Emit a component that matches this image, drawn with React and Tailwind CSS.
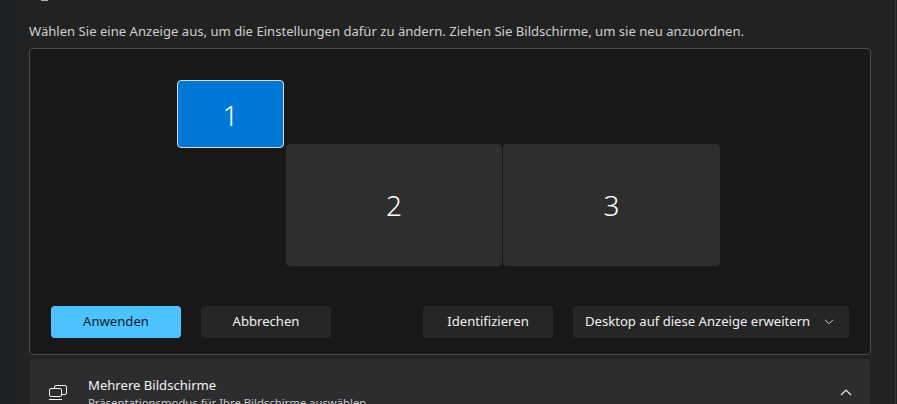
function Monitor({ n, className }) {
  return (
    <div className={`absolute flex items-center justify-center text-[28px] font-light text-white ${className}`}>
      {n}
    </div>
  );
}

function Btn({ children, className = "" }) {
  return (
    <button className={`flex h-8 items-center rounded-[4px] text-[13.1px] ${className}`}>
      {children}
    </button>
  );
}

export default function App() {
  return (
    <div className="relative h-[404px] w-[897px] overflow-hidden bg-gradient-to-r from-[#1d2024] from-0% to-[#222222] to-[4%] font-['Noto_Sans',sans-serif]">
      <div className="absolute left-[41px] top-0 h-px w-[7px] bg-[#b0b0b0]" />
      <div className="absolute right-[1px] top-0 h-full w-px bg-[#383838]" />
      <div className="flex h-full flex-col pl-[29px] pr-[26px] pt-[22px]">
        <p className="h-[26px] shrink-0 whitespace-nowrap text-[13.1px] leading-[19px] text-[#cfcfcf]">
          Wählen Sie eine Anzeige aus, um die Einstellungen dafür zu ändern. Ziehen Sie Bildschirme, um sie neu anzuordnen.
        </p>
        <div className="relative h-[307px] w-[842px] shrink-0 rounded-[4px] border border-[#4a4a4a] bg-[#181818]">
          <Monitor n="1" className="left-[147px] top-[31px] h-[68px] w-[107px] rounded-[4px] border border-[#d5dde3] bg-[#0078d7] pt-[2px]" />
          <Monitor n="2" className="left-[256px] top-[95px] h-[122px] w-[216px] rounded-[4px] bg-[#2e2e2e]" />
          <Monitor n="3" className="left-[473px] top-[95px] h-[122px] w-[217px] rounded-[4px] bg-[#2e2e2e]" />
          <div className="absolute bottom-[16px] left-[21px] right-[21px] flex items-center">
            <Btn className="w-[130px] justify-center bg-[#4cc2ff] text-[#10202a]">Anwenden</Btn>
            <Btn className="ml-[20px] w-[130px] justify-center bg-[#262626] text-[#f0f0f0]">Abbrechen</Btn>
            <Btn className="ml-[92px] w-[130px] justify-center bg-[#262626] text-[#f0f0f0]">Identifizieren</Btn>
            <Btn className="ml-[20px] w-[276px] justify-between bg-[#262626] pl-[12px] pr-[15px] text-[#f0f0f0]">
              <span>Desktop auf diese Anzeige erweitern</span>
              <svg width="10" height="6" viewBox="0 0 10 6" fill="none" stroke="#cfcfcf" strokeWidth="1">
                <path d="M1 .8 5 4.8 9 .8" />
              </svg>
            </Btn>
          </div>
        </div>
        <div className="mx-px mt-[4px] flex h-[60px] w-[840px] shrink-0 items-start rounded-t-[4px] bg-[#2d2d30] pl-[18px] pr-[18px] pt-[16px]">
          <svg className="mt-[10px]" width="20" height="16" viewBox="0 0 20 16" fill="none" stroke="#f2f2f2" strokeWidth="1">
            <rect x="6.5" y="0.5" width="12" height="9" rx="1.5" />
            <rect x="1.5" y="3.5" width="12" height="8" rx="1.5" fill="#2d2d30" />
            <path d="M1 14.5h13" />
          </svg>
          <div className="ml-[20px] flex-1">
            <div className="text-[13.1px] leading-[20px] text-[#f2f2f2]">Mehrere Bildschirme</div>
            <div className="text-[11.3px] leading-[16px] text-[#c8c8c8]">Präsentationsmodus für Ihre Bildschirme auswählen</div>
          </div>
          <svg className="mt-[13px]" width="12" height="8" viewBox="0 0 12 8" fill="none" stroke="#f2f2f2" strokeWidth="1.2">
            <path d="M1 7 6 2l5 5" />
          </svg>
        </div>
      </div>
    </div>
  );
}
